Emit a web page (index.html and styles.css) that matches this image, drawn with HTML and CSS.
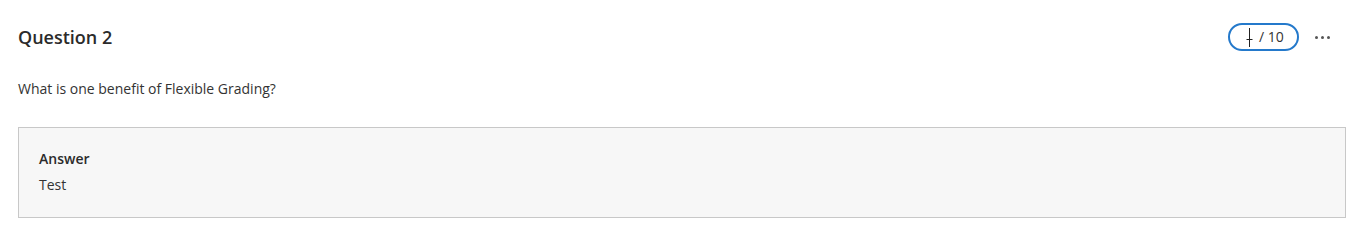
FILE: index.html
```html
<!DOCTYPE html>
<html lang="en">
<head>
<meta charset="utf-8">
<title>Question 2</title>
<link rel="stylesheet" href="styles.css">
</head>
<body>
<div class="question">
  <div class="header">
    <h2 class="title">Question 2</h2>
    <div class="actions">
      <div class="score">
        <svg class="caret" width="7" height="19" viewBox="0 0 7 19"><path d="M3.5 0V19M0.5 11.5H6.5" stroke="#222" stroke-width="1" fill="none"/></svg>
        <span class="max">/ 10</span>
      </div>
      <button class="more" aria-label="More options">
        <span class="dot"></span><span class="dot"></span><span class="dot"></span>
      </button>
    </div>
  </div>
  <p class="prompt">What is one benefit of Flexible Grading?</p>
  <div class="answer">
    <div class="label">Answer</div>
    <div class="value">Test</div>
  </div>
</div>
</body>
</html>
```
FILE: styles.css
```css
html, body {
  margin: 0;
  padding: 0;
  background: #fff;
}
body {
  font-family: "Open Sans", "Noto Sans", sans-serif;
  color: #262626;
}
.question {
  padding: 23px 19px 0 18px;
}
.header {
  display: flex;
  align-items: center;
  justify-content: space-between;
  height: 28px;
}
.title {
  margin: 0;
  font-size: 18px;
  font-weight: 600;
  line-height: 28px;
  color: #2b2b2b;
}
.actions {
  display: flex;
  align-items: center;
  gap: 10px;
  margin-right: 11px;
}
.score {
  box-sizing: border-box;
  width: 71px;
  height: 28px;
  border: 2px solid #2479cb;
  border-radius: 14px;
  display: flex;
  align-items: center;
  padding-left: 16px;
}
.caret {
  display: block;
  margin-top: 1px;
}
.max {
  margin-left: 6px;
  font-size: 14px;
  color: #333;
  line-height: 20px;
}
.more {
  border: 0;
  background: transparent;
  padding: 0;
  width: 26px;
  height: 24px;
  display: flex;
  align-items: center;
  justify-content: center;
  gap: 3px;
}
.dot {
  width: 3px;
  height: 3px;
  border-radius: 50%;
  background: #555;
}
.prompt {
  margin: 29px 0 0;
  font-size: 14px;
  line-height: 18px;
  color: #333;
}
.answer {
  margin-top: 29px;
  border: 1px solid #c8c8c8;
  background: #f7f7f7;
  padding: 21px 20px 22px;
  font-size: 14px;
  color: #333;
}
.label {
  font-weight: 600;
  line-height: 20px;
  color: #2b2b2b;
}
.value {
  margin-top: 6px;
  line-height: 20px;
}
```
